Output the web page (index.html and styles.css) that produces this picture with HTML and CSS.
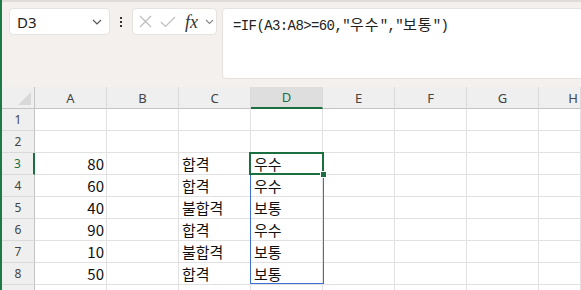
FILE: index.html
```html
<!DOCTYPE html>
<html lang="ko">
<head>
    <meta charset="UTF-8">
    <meta name="viewport" content="width=device-width, initial-scale=1.0">
    <title>Excel</title>
    <link rel="stylesheet" href="styles.css">
</head>
<body>
    <div class="window">
        <div class="toolbar">
            <div class="name-box">
                <span class="name">D3</span>
                <svg class="chev" width="10" height="6" viewBox="0 0 10 6"><path d="M1 1l4 4 4-4" fill="none" stroke="#555" stroke-width="1.2"/></svg>
            </div>
            <div class="more"><i></i><i></i><i></i></div>
            <div class="fx-box">
                <svg width="13" height="13" viewBox="0 0 13 13"><path d="M1 1l11 11M12 1L1 12" stroke="#bdbdbd" stroke-width="1.2"/></svg>
                <svg width="16" height="12" viewBox="0 0 16 12"><path d="M1 6l4.5 4.5L15 1" fill="none" stroke="#bdbdbd" stroke-width="1.2"/></svg>
                <span class="fx">fx</span>
                <svg class="chev-sm" width="9" height="6" viewBox="0 0 9 6"><path d="M1 1l3.5 3.5L8 1" fill="none" stroke="#888" stroke-width="1.1"/></svg>
            </div>
            <div class="formula">=IF(A3:A8&gt;=60,"<span class="ko">우수</span>","<span class="ko">보통</span>")</div>
        </div>

        <div class="sheet">
            <div class="grid">
                <div class="corner"><span class="tri"></span></div>
                <div class="col">A</div>
                <div class="col">B</div>
                <div class="col">C</div>
                <div class="col on">D</div>
                <div class="col">E</div>
                <div class="col">F</div>
                <div class="col">G</div>
                <div class="col last">H</div>

                <div class="row">1</div>
                <div class="cell"></div><div class="cell"></div><div class="cell"></div><div class="cell"></div><div class="cell"></div><div class="cell"></div><div class="cell"></div><div class="cell"></div>

                <div class="row">2</div>
                <div class="cell"></div><div class="cell"></div><div class="cell"></div><div class="cell"></div><div class="cell"></div><div class="cell"></div><div class="cell"></div><div class="cell"></div>

                <div class="row on">3</div>
                <div class="cell num">80</div><div class="cell"></div><div class="cell">합격</div><div class="cell">우수</div><div class="cell"></div><div class="cell"></div><div class="cell"></div><div class="cell"></div>

                <div class="row">4</div>
                <div class="cell num">60</div><div class="cell"></div><div class="cell">합격</div><div class="cell">우수</div><div class="cell"></div><div class="cell"></div><div class="cell"></div><div class="cell"></div>

                <div class="row">5</div>
                <div class="cell num">40</div><div class="cell"></div><div class="cell">불합격</div><div class="cell">보통</div><div class="cell"></div><div class="cell"></div><div class="cell"></div><div class="cell"></div>

                <div class="row">6</div>
                <div class="cell num">90</div><div class="cell"></div><div class="cell">합격</div><div class="cell">우수</div><div class="cell"></div><div class="cell"></div><div class="cell"></div><div class="cell"></div>

                <div class="row">7</div>
                <div class="cell num">10</div><div class="cell"></div><div class="cell">불합격</div><div class="cell">보통</div><div class="cell"></div><div class="cell"></div><div class="cell"></div><div class="cell"></div>

                <div class="row">8</div>
                <div class="cell num">50</div><div class="cell"></div><div class="cell">합격</div><div class="cell">보통</div><div class="cell"></div><div class="cell"></div><div class="cell"></div><div class="cell"></div>

                <div class="row"></div>
                <div class="cell"></div><div class="cell"></div><div class="cell"></div><div class="cell"></div><div class="cell"></div><div class="cell"></div><div class="cell"></div><div class="cell"></div>
            </div>

            <!-- 선택 영역 -->
            <div class="sel-range"></div>
            <div class="sel-active"><i class="handle"></i></div>
        </div>
    </div>
</body>
</html>
```

FILE: styles.css
```css
* {
    margin: 0;
    padding: 0;
    box-sizing: border-box;
}

body {
    width: 581px;
    height: 290px;
    overflow: hidden;
    background: #fff;
    font-family: "Noto Sans", "Noto Sans CJK KR", sans-serif;
}

.window {
    height: 290px;
    border-left: 2px solid #1b7a45;
    overflow: hidden;
}

/* 수식 입력줄 */
.toolbar {
    height: 87px;
    background: #f3f0ed;
    border-top: 2px solid #dedbd8;
    padding: 6px 0 0 7px;
    display: flex;
    align-items: flex-start;
}

.name-box {
    width: 101px;
    height: 27px;
    background: #fff;
    border: 1px solid #e6e2df;
    border-radius: 4px;
    display: flex;
    align-items: center;
    justify-content: space-between;
    padding: 0 7px 0 7px;
}

.name {
    font-size: 15px;
    color: #222;
}

.more {
    width: 22px;
    height: 27px;
    display: flex;
    flex-direction: column;
    align-items: center;
    justify-content: center;
    gap: 2px;
}

.more i {
    width: 2px;
    height: 2px;
    background: #333;
}

.fx-box {
    width: 85px;
    height: 27px;
    background: #fff;
    border: 1px solid #e6e2df;
    border-radius: 4px;
    display: flex;
    align-items: center;
    padding-left: 6px;
    gap: 8px;
}

.fx {
    font-family: "Liberation Serif", serif;
    font-style: italic;
    font-size: 18px;
    color: #333;
    margin-left: 1px;
    line-height: 1;
}

.chev-sm {
    margin-left: -1px;
}

.formula {
    flex: 1;
    height: 71px;
    margin-left: 5px;
    margin-right: -10px;
    background: #fff;
    border: 1px solid #e6e2df;
    border-radius: 4px;
    padding: 4px 0 0 10px;
    font-family: "Liberation Mono", monospace;
    font-size: 14px;
    letter-spacing: -0.6px;
    color: #222;
    white-space: nowrap;
}

.formula .ko {
    font-family: "Noto Sans CJK KR", sans-serif;
    font-size: 15px;
    letter-spacing: 1px;
}

/* 시트 */
.sheet {
    position: relative;
}

.grid {
    display: grid;
    grid-template-columns: 33px repeat(7, 72px) 1fr;
    grid-auto-rows: 22px;
}

.corner,
.col,
.row {
    background: #efefef;
    color: #444;
}

.corner {
    border-right: 1px solid #c4c4c4;
    border-bottom: 1px solid #c4c4c4;
    position: relative;
}

.tri {
    position: absolute;
    right: 3px;
    bottom: 3px;
    width: 0;
    height: 0;
    border-left: 13px solid transparent;
    border-bottom: 13px solid #d8d8d8;
}

.col {
    border-right: 1px solid #dadada;
    border-bottom: 1px solid #c4c4c4;
    font-size: 13px;
    display: flex;
    align-items: center;
    justify-content: center;
}

.col.last {
    justify-content: flex-end;
    padding-right: 2px;
}

.col.on {
    background: #dedede;
    color: #1b6e40;
    border-bottom: 2px solid #1b6e40;
}

.row {
    border-right: 1px solid #c4c4c4;
    border-bottom: 1px solid #dadada;
    font-size: 12px;
    display: flex;
    align-items: center;
    justify-content: center;
}

.row.on {
    color: #1b6e40;
    border-right: 2px solid #1b6e40;
}

.cell {
    border-right: 1px solid #e1e1e1;
    border-bottom: 1px solid #e1e1e1;
    font-family: "Noto Sans CJK KR", sans-serif;
    font-size: 15px;
    line-height: 21px;
    color: #111;
    padding: 0 3px;
    white-space: nowrap;
}

.cell.num {
    text-align: right;
    padding-right: 2px;
}

.sel-range {
    position: absolute;
    left: 248px;
    top: 87px;
    width: 74px;
    height: 110px;
    border: 1px solid #3b6fd1;
}

.sel-active {
    position: absolute;
    left: 247px;
    top: 65px;
    width: 75px;
    height: 23px;
    border: 2px solid #1b6e40;
}

.handle {
    position: absolute;
    right: -5px;
    bottom: -5px;
    width: 7px;
    height: 7px;
    background: #1b6e40;
    border: 1px solid #fff;
}
```
